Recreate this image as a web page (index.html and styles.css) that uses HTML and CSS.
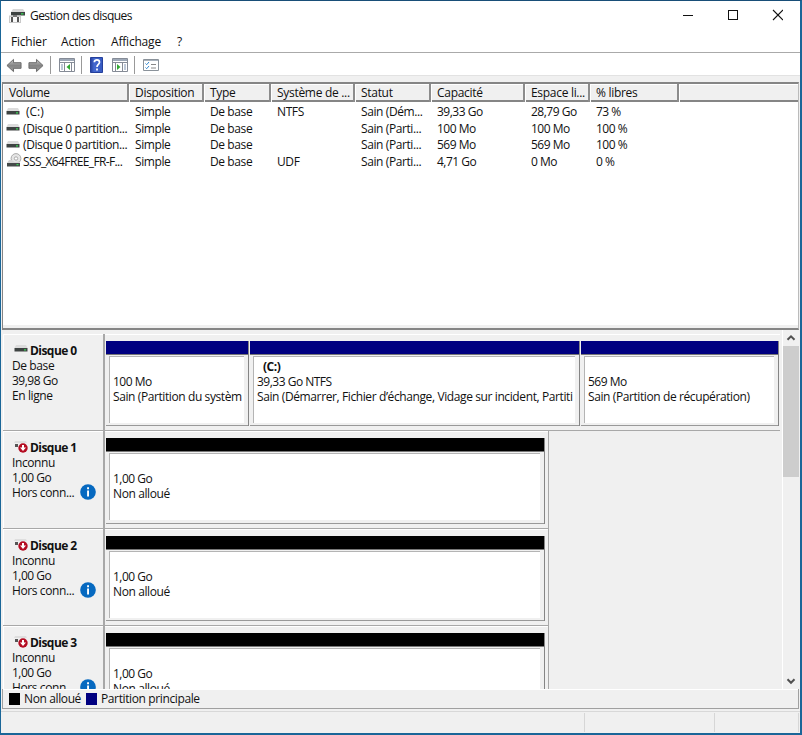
FILE: index.html
```html
<!DOCTYPE html>
<html lang="fr">
<head>
<meta charset="utf-8">
<title>Gestion des disques</title>
<link rel="stylesheet" href="styles.css">
</head>
<body>
<svg class="defs" width="0" height="0" aria-hidden="true">
  <defs>
    <linearGradient id="steel" x1="0" y1="0" x2="0" y2="1"><stop offset="0" stop-color="#c9c9c9"/><stop offset=".5" stop-color="#858585"/><stop offset="1" stop-color="#9c9c9c"/></linearGradient>
    <linearGradient id="book" x1="0" y1="0" x2="1" y2="0"><stop offset="0" stop-color="#25409c"/><stop offset=".3" stop-color="#4468d0"/><stop offset="1" stop-color="#3559c0"/></linearGradient>
    <symbol id="drive" viewBox="0 0 14 8"><path d="M2 0h10l1.500 3h-13z" fill="#dcdcdc"/><path d="M.5 3h13v3.500h-13z" fill="#3e4342"/><path d="M10 4.200h2v1.200h-2z" fill="#39d353"/></symbol>
    <symbol id="disc" viewBox="0 0 16 16"><circle cx="10" cy="5.500" r="4.900" fill="#e5e5e5" stroke="#aaa"/><circle cx="10" cy="5.500" r="1.700" fill="#fff" stroke="#aaa"/><path d="M3 7l-2 3h13l-1-2-4 1.200-3.500-2.200z" fill="#d6d6d6"/><path d="M1 10h13v3.500H1z" fill="#454a49"/><path d="M10.500 11h2v1.200h-2z" fill="#39d353"/></symbol>
    <symbol id="offline" viewBox="0 0 14 12"><path d="M1 0h11l1 2H0z" fill="#dedede"/><path d="M1 3h3v3H1z" fill="#555"/><circle cx="9" cy="7" r="4.700" fill="#b40c22"/><path d="M8 4h2v2.500h2L9 10 6 6.500h2z" fill="#fff"/></symbol>
    <symbol id="info" viewBox="0 0 16 16"><circle cx="8" cy="8" r="7.800" fill="#0669c0"/><path d="M7.100 3.300h1.900v1.900H7.100zM7.100 6.500h1.900v6H7.100z" fill="#fff"/></symbol>
    <symbol id="arrow" viewBox="0 0 17 15"><path d="M1 7.500L8 1v3.500h8v6H8V14z" fill="url(#steel)" stroke="#666" stroke-linejoin="round"/></symbol>
    <symbol id="panel" viewBox="0 0 16 14"><path d="M.5.5h15v13H.5z" fill="#fff" stroke="#858b96"/><path d="M1 1h14v2H1z" fill="#9da8b7"/><path d="M1 4.500h14" stroke="#858b96"/></symbol>
  </defs>
</svg>
<div class="window">
  <header class="titlebar">
    <svg class="app-icon" viewBox="0 0 16 14"><path d="M4 0h10l2 3H2z" fill="#d7d7d7"/><path d="M2 3h14v3.500H2z" fill="#3d4241"/><path d="M12 4.200h2.500v1.300H12z" fill="#39d353"/><path d="M0 6.500h12V14H0z" fill="#c9c9c9"/><path d="M1 8h10v5H1z" fill="#f8f8f8"/><path d="M2 8h2v5H2zM8 8h2v5H8z" fill="#555"/><path d="M4 6h4v2H4z" fill="#777"/></svg>
    <h1 class="title">Gestion des disques</h1>
    <svg class="caption" viewBox="0 0 100 12" shape-rendering="crispEdges"><path d="M0 6.500h10M45.500 1.500h9v9h-9z" fill="none" stroke="#111"/><path d="M90 1l10 10M100 1L90 11" stroke="#111" stroke-width="1.100" shape-rendering="auto"/></svg>
  </header>
  <nav class="menu"><span class="m1">Fichier</span><span class="m2">Action</span><span class="m3">Affichage</span><span>?</span></nav>
  <div class="toolbar">
    <svg class="arrow"><use href="#arrow"/></svg>
    <svg class="arrow forward"><use href="#arrow"/></svg>
    <i class="sep"></i>
    <svg class="tool" viewBox="0 0 16 14"><use href="#panel"/><path d="M5.500 5v8M12.500 5v8" stroke="#858b96"/><path d="M2 7h2M2 9h2M2 11h2" stroke="#7c91b0"/><path d="M11 6v6L7.500 9z" fill="#32a832"/></svg>
    <i class="sep"></i>
    <svg class="help" viewBox="0 0 13 16"><path d="M.5.500h12v15H.5z" fill="url(#book)" stroke="#25409c"/><path d="M4.300 5.200C4.300 2 9.500 2 9.500 5.200 9.500 7.300 7 7.300 7 10M7 11.500v2" fill="none" stroke="#fff" stroke-width="1.700"/></svg>
    <svg class="tool" viewBox="0 0 16 14"><use href="#panel"/><path d="M3.500 5v8M10.500 5v8" stroke="#858b96"/><path d="M12 7h2M12 9h2M12 11h2" stroke="#7c91b0"/><path d="M5 6v6l3.500-3z" fill="#32a832"/></svg>
    <i class="sep"></i>
    <svg class="list" viewBox="0 0 16 12"><path d="M.5.500h15v11H.5z" fill="#fff" stroke="#8a929a"/><path d="M1 1.500h14" stroke="#a9b2bc"/><path d="M2.500 4.500l1.200 1.200L6 3M2.500 8.500l1.200 1.200L6 7" fill="none" stroke="#2f86d0"/><path d="M8 5.500h5M8 9h5" stroke="#888"/></svg>
  </div>
  <main class="content">
    <section class="volumes">
      <div class="vrow head"><span>Volume</span><span>Disposition</span><span>Type</span><span>Système de ...</span><span>Statut</span><span>Capacité</span><span>Espace li...</span><span>% libres</span><span></span></div>
      <div class="vrow"><span class="name"><svg><use href="#drive"/></svg><b class="indent">(C:)</b></span><span>Simple</span><span>De base</span><span>NTFS</span><span>Sain (Dém...</span><span class="num">39,33 Go</span><span class="num">28,79 Go</span><span class="num">73 %</span></div>
      <div class="vrow"><span class="name"><svg><use href="#drive"/></svg><b>(Disque 0 partition...</b></span><span>Simple</span><span>De base</span><span></span><span>Sain (Parti...</span><span class="num">100 Mo</span><span class="num">100 Mo</span><span class="num">100 %</span></div>
      <div class="vrow"><span class="name"><svg><use href="#drive"/></svg><b>(Disque 0 partition...</b></span><span>Simple</span><span>De base</span><span></span><span>Sain (Parti...</span><span class="num">569 Mo</span><span class="num">569 Mo</span><span class="num">100 %</span></div>
      <div class="vrow"><span class="name"><svg class="disc"><use href="#disc"/></svg><b class="iso">SSS_X64FREE_FR-F...</b></span><span>Simple</span><span>De base</span><span>UDF</span><span>Sain (Parti...</span><span class="num">4,71 Go</span><span class="num">0 Mo</span><span class="num">0 %</span></div>
    </section>
    <section class="disks">
      <div class="rows">
        <article class="disk">
          <div class="label"><h2><svg class="ok"><use href="#drive"/></svg><span>Disque 0</span></h2><p>De base</p><p class="num">39,98 Go</p><p>En ligne</p></div>
          <div class="parts full">
            <div class="part primary p1"><div class="box"><p></p><p class="num">100 Mo</p><p>Sain (Partition du systèm</p></div></div>
            <div class="part primary p2"><div class="box"><p class="letter">(C:)</p><p class="num">39,33 Go NTFS</p><p class="boot">Sain (Démarrer, Fichier d’échange, Vidage sur incident, Partiti</p></div></div>
            <div class="part primary p3"><div class="box"><p></p><p class="num">569 Mo</p><p>Sain (Partition de récupération)</p></div></div>
          </div>
        </article>
        <article class="disk">
          <div class="label"><h2><svg class="off"><use href="#offline"/></svg><span>Disque 1</span></h2><p>Inconnu</p><p class="num">1,00 Go</p><p>Hors conn...<svg class="info"><use href="#info"/></svg></p></div>
          <div class="parts"><div class="part"><div class="box"><p></p><p class="num">1,00 Go</p><p>Non alloué</p></div></div></div>
        </article>
        <article class="disk">
          <div class="label"><h2><svg class="off"><use href="#offline"/></svg><span>Disque 2</span></h2><p>Inconnu</p><p class="num">1,00 Go</p><p>Hors conn...<svg class="info"><use href="#info"/></svg></p></div>
          <div class="parts"><div class="part"><div class="box"><p></p><p class="num">1,00 Go</p><p>Non alloué</p></div></div></div>
        </article>
        <article class="disk">
          <div class="label"><h2><svg class="off"><use href="#offline"/></svg><span>Disque 3</span></h2><p>Inconnu</p><p class="num">1,00 Go</p><p>Hors conn...<svg class="info"><use href="#info"/></svg></p></div>
          <div class="parts"><div class="part"><div class="box"><p></p><p class="num">1,00 Go</p><p>Non alloué</p></div></div></div>
        </article>
      </div>
      <div class="scroll">
        <svg viewBox="0 0 16 16"><path d="M4.500 9.800L8 6.300l3.500 3.500" fill="none" stroke="#505050" stroke-width="2"/></svg>
        <div class="thumb"></div>
        <svg class="down" viewBox="0 0 16 16"><path d="M4.500 6.300L8 9.800l3.500-3.500" fill="none" stroke="#505050" stroke-width="2"/></svg>
      </div>
    </section>
    <div class="legend"><i class="black"></i><span>Non alloué</span><i class="navy"></i><span>Partition principale</span></div>
  </main>
  <footer class="status"><span></span><span></span><span></span></footer>
</div>
</body>
</html>
```
FILE: styles.css
```css
* { box-sizing: border-box; }
body { margin: 0; overflow: hidden; font: 12px/15px "Open Sans", "Noto Sans", sans-serif; font-stretch: 88%; letter-spacing: -.4px; color: #111; }
h1, h2, p { margin: 0; font-size: inherit; white-space: pre; }
svg { display: block; flex: none; }
.num { letter-spacing: -.5px; }
.defs { position: absolute; }
.window { width: 802px; height: 735px; display: flex; flex-direction: column; background: #f0f0f0; border: solid #1a6698; border-width: 1px 2px 2px 1px; border-top-color: #184e78; }

.titlebar { height: 29px; background: #fff; display: flex; align-items: center; padding: 0 17px 0 8px; }
.app-icon { width: 16px; height: 14px; }
.title { font-weight: 400; margin-left: 5px; letter-spacing: -.55px; }
.caption { width: 100px; height: 12px; margin-left: auto; margin-top: -1px; }
.menu { height: 22px; background: #fff; display: flex; align-items: center; padding-left: 10px; letter-spacing: -.2px; }
.m1 { width: 50px; }
.m2 { width: 50px; }
.m3 { width: 66px; }
.toolbar { height: 24px; background: #fff; border-top: 1px solid #aaa; border-bottom: 1px solid #e2e2e2; display: flex; align-items: center; padding: 2px 0 0 5px; flex: none; }
.arrow { width: 16px; height: 15px; margin-right: 6px; }
.forward { transform: scaleX(-1); margin-right: 6px; }
.sep { width: 1px; height: 18px; background: #999; margin-right: 8px; }
.tool { width: 16px; height: 14px; margin-right: 6px; }
.help { width: 13px; height: 16px; margin-right: 9px; }
.list { width: 16px; height: 12px; }

.content { height: 634px; flex: none; padding: 6px 1px 0; display: flex; flex-direction: column; }
.volumes { height: 248px; background: #fff; border: solid #858585; border-width: 2px 1px 2px; border-right-color: #bbb; flex: none; display: flex; flex-direction: column; box-shadow: inset 0 -3px #f0f0f0; }
.vrow { display: grid; grid-template-columns: 126px 75px 67px 84px 76px 94px 65px 89px 1fr; height: 16.600px; line-height: 17px; white-space: nowrap; flex: none; }
.vrow > span { padding-left: 6px; }
.vrow b { font-weight: 400; }
.head { height: 18px; line-height: 18px; background: #f0f0f0; border-bottom: 2px solid #858585; margin-bottom: 1px; letter-spacing: -.3px; }
.head > span { border-right: 2px solid #8c8c8c; box-shadow: inset 1px 1px #fff; }
.head > span:last-child { border: 0; }
.vrow > .name { display: flex; align-items: center; padding-left: 3px; }
.name svg { width: 14px; height: 8px; margin-right: 3px; }
.name .disc { width: 16px; height: 16px; margin-right: 1px; }
.name .iso { letter-spacing: -.62px; }
.name .indent { margin-left: 3px; letter-spacing: 0; }

.disks { height: 359px; flex: none; display: flex; padding-left: 1px; overflow: hidden; }
.rows { width: 777px; padding-top: 4px; flex: none; }
.disk { height: 97.300px; display: flex; }
.label { width: 102px; border: solid #a8a8a8; border-width: 0 2px 1px 0; padding: 9px 0 0 9px; box-shadow: inset 1px 1px #fff; }
.label h2 { display: flex; height: 15px; font-weight: 700; letter-spacing: -.55px; }
.label h2 span { margin-left: 2px; }
.label p { height: 15px; display: flex; }
.ok { width: 14px; height: 8px; margin: 2px 0 0 2px; }
.off { width: 14px; height: 12px; margin: 1px 0 0 2px; }
.info { width: 16px; height: 16px; margin-left: auto; margin-right: 7px; margin-top: -1px; }
.parts { width: 444px; display: flex; padding: 7px 3px 4px 0; border: solid #a8a8a8; border-width: 0 1px 1px 0; box-shadow: inset 0 1px #fff; }
.parts.full { width: 675px; border-right: 0; padding-right: 1px; }
.part { flex: 1; min-width: 0; border-top: 13px solid #000; border-bottom: 1px solid #999; padding: 2px 4px 3px 3px; box-shadow: 1px 0 #858585, inset 0 1px #777; margin: 0 1px; }
.primary { border-top-color: #000080; }
.p1 { flex: 0 0 142px; margin-right: 2px; }
.p2 { flex: 0 0 329px; margin: 0 2px 0 0; }
.p3 { margin-left: 0; }
.box { height: 67px; background: #fff; border: solid #b4b4b4; border-width: 1px 0 0 1px; padding: 2px 0 0 3px; }
.box p { height: 15px; }
.box .boot { letter-spacing: -.39px; }
.box .letter { font-weight: 700; padding-left: 6px; letter-spacing: -.5px; }
.scroll { width: 17px; margin-left: auto; border-left: 1px solid #fff; display: flex; flex-direction: column; }
.scroll svg { width: 16px; height: 16px; }
.thumb { height: 131px; background: #cdcdcd; }
.scroll .down { margin-top: auto; }
.legend { height: 20px; display: flex; align-items: center; padding: 0 0 0 6px; border: solid #a0a0a0; border-width: 0 1px 1px; box-shadow: inset 0 1px #fff; }
.legend i { width: 11px; height: 12px; margin-right: 4px; }
.legend span { margin-right: 5px; letter-spacing: -.38px; }
.black { background: #000; }
.navy { background: #000080; }
.status { flex: 1; margin-top: 1px; border-top: 1px solid #d8d8d8; display: grid; grid-template-columns: 584px 130px 1fr; padding: 1px 1px 1px 0; }
.status span { border-right: 1px solid #d6d6d6; }
```
